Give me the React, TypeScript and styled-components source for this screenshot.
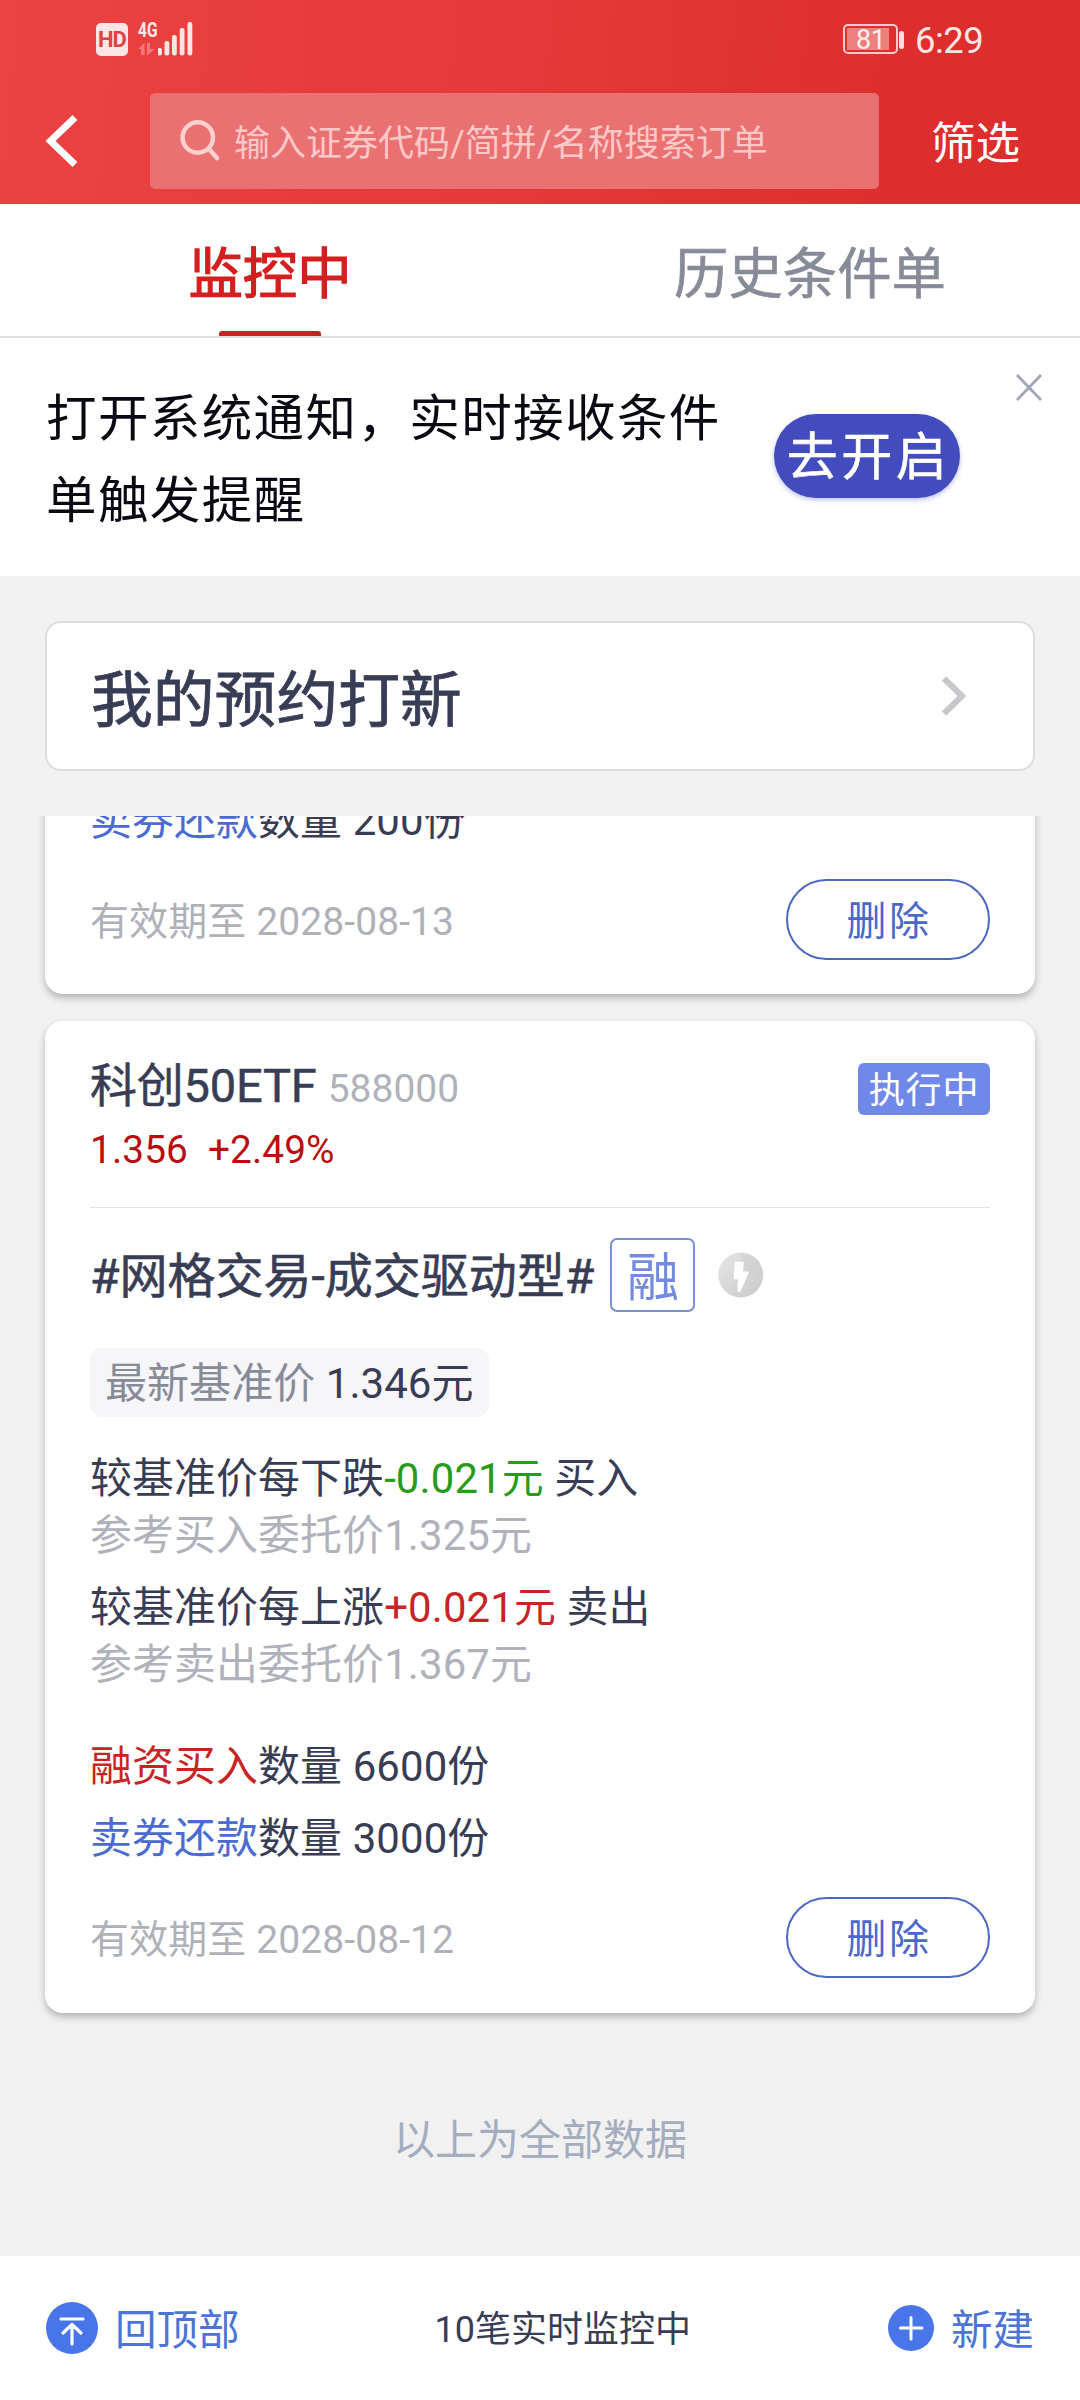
import React from "react";
import styled, { createGlobalStyle } from "styled-components";

const GlobalStyle = createGlobalStyle`
  *, *::before, *::after { box-sizing: border-box; }
  body {
    margin: 0;
    background: #f1f1f1;
    font-family: Roboto, "Noto Sans CJK SC", sans-serif;
    color: #383d55;
  }
  button { font-family: inherit; margin: 0; padding: 0; cursor: pointer; }
`;

const Screen = styled.div`
  width: 1080px;
  height: 2400px;
  display: flex;
  flex-direction: column;
  overflow: hidden;
  background: #f1f1f1;
  white-space: nowrap;
`;

/* Header */
const Header = styled.header`
  height: 204px;
  flex: none;
  background: linear-gradient(95deg, #eb4242 0%, #e63838 50%, #dd2d2d 85%, #dd2d2d 100%);
`;

const StatusBar = styled.div`
  height: 93px;
  display: flex;
  align-items: flex-start;
  justify-content: space-between;
  padding: 20px 96px 0 96px;
`;

const StatusGroup = styled.div`
  display: flex;
  align-items: flex-start;
`;

const HdBadge = styled.span`
  width: 32px;
  height: 33px;
  margin-top: 3px;
  border-radius: 5px;
  background: #ffe6e6;
  color: #dd4545;
  font-size: 22px;
  font-weight: 700;
  line-height: 34px;
  text-align: center;
  letter-spacing: -0.8px;
`;

const Network = styled.div`
  width: 20px;
  margin-left: 10px;
  display: flex;
  flex-direction: column;
`;

const NetworkLabel = styled.span`
  height: 19px;
  font-size: 21px;
  line-height: 20px;
  font-weight: 700;
  color: #ffe9e9;
  transform: scaleX(0.74);
  transform-origin: left center;
`;

const Battery = styled.div`
  width: 55px;
  height: 30px;
  margin-top: 4px;
  padding: 2px;
  border: 2px solid #fbc9c9;
  border-radius: 5px;
`;

const BatteryLevel = styled.div`
  width: 42px;
  height: 22px;
  background: #ee8080;
  color: #fff0f0;
  font-size: 27px;
  line-height: 24px;
  padding-left: 9px;
  letter-spacing: -0.5px;
`;

const BatteryTip = styled.span`
  width: 5px;
  height: 18px;
  margin: 11px 0 0 1px;
  border-radius: 3px;
  background: #ffdede;
`;

const Clock = styled.span`
  width: 69px;
  margin-left: 11px;
  font-size: 36.5px;
  line-height: 42px;
  color: #ffe4e4;
  letter-spacing: -0.5px;
`;

const SearchRow = styled.div`
  display: flex;
  align-items: center;
  height: 96px;
  padding-left: 44px;
`;

const IconButton = styled.button`
  display: flex;
  border: 0;
  background: none;
`;

const SearchBox = styled.div`
  width: 729px;
  height: 96px;
  margin-left: 70px;
  padding-left: 30px;
  display: flex;
  align-items: center;
  border-radius: 5px;
  background: #ea7171;
  color: #ffc8c8;
  font-size: 36px;
`;

const SearchText = styled.span`
  margin-left: 13px;
  padding-top: 5px;
  line-height: 48px;
`;

const FilterButton = styled.button`
  border: 0;
  background: none;
  margin-left: 52px;
  padding-top: 5px;
  color: #fff;
  font-size: 44.5px;
  line-height: 60px;
`;

/* Tabs */
const Tabs = styled.nav`
  height: 134px;
  flex: none;
  display: flex;
  background: #fff;
  border-bottom: 2px solid #e0e1e5;
`;

const Tab = styled.div<{ $active?: boolean }>`
  flex: 1;
  display: flex;
  flex-direction: column;
  align-items: center;
  justify-content: space-between;
  padding-top: 36px;
  font-size: 54.4px;
  line-height: 70px;
  color: ${(p) => (p.$active ? "#d31f1f" : "#878b98")};
  -webkit-text-stroke: ${(p) => (p.$active ? "1.2px" : "0.6px")} currentColor;
`;

const TabMark = styled.span`
  width: 102px;
  height: 5px;
  border-radius: 3px 3px 0 0;
  background: #c92222;
`;

/* Notice */
const Notice = styled.section`
  height: 238px;
  flex: none;
  display: flex;
  background: #fff;
  padding: 0 38px 0 46px;
`;

const NoticeText = styled.p`
  width: 691px;
  margin: 40px 0 0;
  color: #080912;
  font-size: 50.5px;
  line-height: 82px;
  letter-spacing: 1.4px;
  white-space: normal;
`;

const EnableButton = styled.button`
  width: 186px;
  height: 84px;
  margin: 76px 0 0 37px;
  border: 0;
  border-radius: 42px;
  background: #434cbf;
  box-shadow: 0 2px 5px rgba(67, 76, 191, 0.35);
  color: #fff;
  font-size: 51px;
  line-height: 80px;
  padding-top: 4px;
  letter-spacing: 3.5px;
  text-indent: 3px;
  -webkit-text-stroke: 0.6px currentColor;
`;

const CloseButton = styled(IconButton)`
  margin: 36px 0 0 auto;
  align-self: flex-start;
`;

/* Cards */
const EntryCard = styled.section`
  height: 150px;
  flex: none;
  margin: 45px 45px 45px;
  padding: 0 66px 0 44px;
  display: flex;
  align-items: center;
  justify-content: space-between;
  background: #fff;
  border: 2px solid #dcdddd;
  border-radius: 16px;
`;

const EntryTitle = styled.span`
  font-size: 61.8px;
  line-height: 80px;
  padding-top: 9px;
  -webkit-text-stroke: 0.8px currentColor;
`;

const List = styled.main`
  flex: 1;
  min-height: 0;
  overflow: hidden;
  padding: 0 45px;
`;

const OrderCard = styled.article<{ $cut?: boolean }>`
  height: ${(p) => (p.$cut ? "218px" : "992px")};
  margin: ${(p) => (p.$cut ? "-40px 0 27px" : "0")};
  padding: ${(p) => (p.$cut ? "15px" : "36px")} 45px 0;
  background: #fff;
  border-radius: 18px;
  box-shadow: 0 4px 7px rgba(0, 0, 0, 0.25);
`;

const TitleRow = styled.div`
  display: flex;
  align-items: flex-start;
  justify-content: space-between;
`;

const StockName = styled.div`
  font-size: 47px;
  line-height: 58px;
  -webkit-text-stroke: 0.5px currentColor;
  letter-spacing: -0.2px;
`;

const StockCode = styled.span`
  margin-left: 11px;
  font-size: 39px;
  color: #b0b2bb;
  letter-spacing: 0;
  -webkit-text-stroke: 0;
`;

const StatusTag = styled.span`
  width: 132px;
  height: 52px;
  margin-top: 6px;
  border-radius: 6px;
  background: #7089e8;
  color: #fff;
  font-size: 36px;
  line-height: 56px;
  letter-spacing: 0.8px;
  text-align: center;
`;

const Price = styled.div`
  display: flex;
  gap: 20px;
  height: 90px;
  padding-top: 9px;
  margin-bottom: 30px;
  border-bottom: 1px solid #e2e2e4;
  font-size: 38.8px;
  line-height: 46px;
  letter-spacing: 0.1px;
  color: #b90e10;
`;

const StrategyRow = styled.div`
  height: 74px;
  display: flex;
  align-items: center;
  font-size: 48px;
`;

const StrategyName = styled.span`
  line-height: 60px;
  padding-top: 4px;
  -webkit-text-stroke: 0.6px currentColor;
`;

const MarginTag = styled.span`
  width: 85px;
  height: 74px;
  margin: 0 23px 0 16px;
  border: 2px solid #798fd6;
  border-radius: 7px;
  color: #748ade;
  font-size: 52px;
  line-height: 78px;
  text-align: center;
`;

const BasePrice = styled.div`
  display: inline-block;
  height: 69px;
  margin: 36px 0 32px;
  padding: 0 15px;
  border-radius: 12px;
  background: #f6f6f9;
  font-size: 42px;
  line-height: 72px;
  letter-spacing: 0.05px;
`;

const Line = styled.div<{ $gap?: number }>`
  height: 57px;
  margin-bottom: ${(p) => p.$gap ?? 0}px;
  font-size: 41.9px;
  line-height: 59px;
  letter-spacing: 0.13px;
`;

type Tone = "grey" | "light" | "green" | "red" | "blue";
const tones: Record<Tone, string> = {
  grey: "#878b98",
  light: "#b0b2bb",
  green: "#2a9a1b",
  red: "#c82424",
  blue: "#4c6bd0",
};
const Mark = styled.span<{ $tone: Tone }>`
  color: ${(p) => tones[p.$tone]};
`;

const CardFooter = styled.div`
  height: 81px;
  display: flex;
  align-items: center;
  justify-content: space-between;
  color: #afb1b9;
  font-size: 39px;
  letter-spacing: 0.1px;
`;

const ExpiryText = styled.span`
  line-height: 50px;
  padding-top: 4px;
`;

const DeleteButton = styled.button`
  width: 204px;
  height: 81px;
  border: 2px solid #4c69c3;
  border-radius: 41px;
  background: #fff;
  color: #4a68c8;
  font-size: 40px;
  line-height: 72px;
  padding-top: 5px;
  letter-spacing: 2.5px;
  text-indent: 2px;
`;

const EndText = styled.div`
  margin-top: 99px;
  text-align: center;
  color: #a3adbf;
  font-size: 42px;
  line-height: 57px;
`;

/* Bottom bar */
const BottomBar = styled.footer`
  height: 144px;
  flex: none;
  padding: 0 46px;
  display: flex;
  align-items: center;
  justify-content: space-between;
  background: #fff;
  font-size: 36px;
`;

const BottomAction = styled.button`
  display: flex;
  align-items: center;
  gap: 17px;
  border: 0;
  background: none;
  color: #4c74d4;
  font-size: 41.5px;
  line-height: 56px;
`;

const ActionLabel = styled.span`
  padding-top: 5px;
`;

const CountText = styled.span`
  line-height: 50px;
  padding: 4px 2px 0 0;
`;

const Footer = ({ date }: { date: string }) => (
  <CardFooter>
    <ExpiryText>有效期至 {date}</ExpiryText>
    <DeleteButton>删除</DeleteButton>
  </CardFooter>
);

export default function App() {
  return (
    <>
      <GlobalStyle />
      <Screen>
        <Header>
          <StatusBar>
            <StatusGroup>
              <HdBadge>HD</HdBadge>
              <Network>
                <NetworkLabel>4G</NetworkLabel>
                <svg width="18" height="14" viewBox="0 0 18 14" style={{ marginTop: 4 }} fill="#f37878">
                  <path d="M0 6 L6.5 0 V12 H3 V6 Z" />
                  <path d="M9 0 H12 V6 H17 L9 12.5 Z" />
                </svg>
              </Network>
              <svg width="36" height="36" viewBox="0 0 36 36" fill="#ffe4e4">
                <rect x="-0.5" y="28" width="4.5" height="7.5" rx="2" />
                <rect x="6.5" y="21" width="4.8" height="14.5" rx="2" />
                <rect x="14" y="15" width="4.8" height="20.5" rx="2" />
                <rect x="21.7" y="8" width="4.8" height="27.5" rx="2" />
                <rect x="29.5" y="2" width="4.8" height="33.5" rx="2" />
              </svg>
            </StatusGroup>
            <StatusGroup>
              <Battery>
                <BatteryLevel>81</BatteryLevel>
              </Battery>
              <BatteryTip />
              <Clock>6:29</Clock>
            </StatusGroup>
          </StatusBar>
          <SearchRow>
            <IconButton aria-label="返回">
              <svg width="36" height="56" viewBox="0 0 36 56" fill="none" stroke="#fff" strokeWidth="7">
                <path d="M31 4.5 L6.5 28 L31 51.5" />
              </svg>
            </IconButton>
            <SearchBox>
              <svg width="41" height="42" viewBox="0 0 41 42" fill="none" stroke="#ffd0d0" strokeWidth="4.5" strokeLinecap="round">
                <circle cx="17.8" cy="17.5" r="15.2" />
                <path d="M29 29 L37 38" />
              </svg>
              <SearchText>输入证券代码/简拼/名称搜索订单</SearchText>
            </SearchBox>
            <FilterButton>筛选</FilterButton>
          </SearchRow>
        </Header>

        <Tabs>
          <Tab $active>
            监控中
            <TabMark />
          </Tab>
          <Tab>历史条件单</Tab>
        </Tabs>

        <Notice>
          <NoticeText>打开系统通知，实时接收条件单触发提醒</NoticeText>
          <EnableButton>去开启</EnableButton>
          <CloseButton aria-label="关闭">
            <svg width="26" height="27" viewBox="0 0 26 27" fill="none" stroke="#9ea7b8" strokeWidth="2.8">
              <path d="M1 1 L25 26 M25 1 L1 26" />
            </svg>
          </CloseButton>
        </Notice>

        <EntryCard>
          <EntryTitle>我的预约打新</EntryTitle>
          <svg width="26" height="40" viewBox="0 0 26 40" fill="none" stroke="#c6c7cc" strokeWidth="6">
            <path d="M3 2.5 L21 20 L3 37.5" />
          </svg>
        </EntryCard>

        <List>
          <OrderCard $cut>
            <Line $gap={31}>
              <Mark $tone="blue">卖券还款</Mark>数量 200份
            </Line>
            <Footer date="2028-08-13" />
          </OrderCard>

          <OrderCard>
            <TitleRow>
              <StockName>
                科创50ETF<StockCode>588000</StockCode>
              </StockName>
              <StatusTag>执行中</StatusTag>
            </TitleRow>
            <Price>
              <span>1.356</span>
              <span>+2.49%</span>
            </Price>
            <StrategyRow>
              <StrategyName>#网格交易-成交驱动型#</StrategyName>
              <MarginTag>融</MarginTag>
              <svg width="46" height="46" viewBox="0 0 46 46">
                <defs>
                  <linearGradient id="boltDisc" x1="0" y1="0" x2="1" y2="1">
                    <stop offset="0" stopColor="#e6e6e6" />
                    <stop offset="1" stopColor="#c9c9c9" />
                  </linearGradient>
                </defs>
                <circle cx="22.7" cy="23" r="22.5" fill="url(#boltDisc)" />
                <path d="M22.7 0.5 A22.5 22.5 0 0 1 45.2 23 L30 23 L22.7 12 Z" fill="#cdcdcd" opacity="0.4" />
                <path
                  d="M17.8 10.8 H24.8 L23.8 20.5 H29.8 L21.6 38.8 H20.4 L21 26.2 H16.6 Z"
                  fill="#fff"
                  stroke="#fff"
                  strokeWidth="2"
                  strokeLinejoin="round"
                />
              </svg>
            </StrategyRow>
            <BasePrice>
              <Mark $tone="grey">最新基准价</Mark> 1.346元
            </BasePrice>
            <Line>
              较基准价每下跌<Mark $tone="green">-0.021元</Mark> 买入
            </Line>
            <Line $gap={15}>
              <Mark $tone="light">参考买入委托价1.325元</Mark>
            </Line>
            <Line>
              较基准价每上涨<Mark $tone="red">+0.021元</Mark> 卖出
            </Line>
            <Line $gap={45}>
              <Mark $tone="light">参考卖出委托价1.367元</Mark>
            </Line>
            <Line $gap={15}>
              <Mark $tone="red">融资买入</Mark>数量 6600份
            </Line>
            <Line $gap={31}>
              <Mark $tone="blue">卖券还款</Mark>数量 3000份
            </Line>
            <Footer date="2028-08-12" />
          </OrderCard>

          <EndText>以上为全部数据</EndText>
        </List>

        <BottomBar>
          <BottomAction>
            <svg width="52" height="52" viewBox="0 0 52 52" fill="none" stroke="#fff" strokeWidth="3.2" strokeLinecap="round" strokeLinejoin="round">
              <circle cx="26" cy="26" r="26" fill="#4876e8" stroke="none" />
              <path d="M15 17 H37 M26 42 V23 M17 31 L26 22.5 L35 31" />
            </svg>
            <ActionLabel>回顶部</ActionLabel>
          </BottomAction>
          <CountText>10笔实时监控中</CountText>
          <BottomAction>
            <svg width="46" height="46" viewBox="0 0 46 46" fill="none" stroke="#fff" strokeWidth="3" strokeLinecap="round">
              <circle cx="23" cy="23" r="23" fill="#4876e8" stroke="none" />
              <path d="M12.5 23 H34 M23 12.5 V34" />
            </svg>
            <ActionLabel>新建</ActionLabel>
          </BottomAction>
        </BottomBar>
      </Screen>
    </>
  );
}
